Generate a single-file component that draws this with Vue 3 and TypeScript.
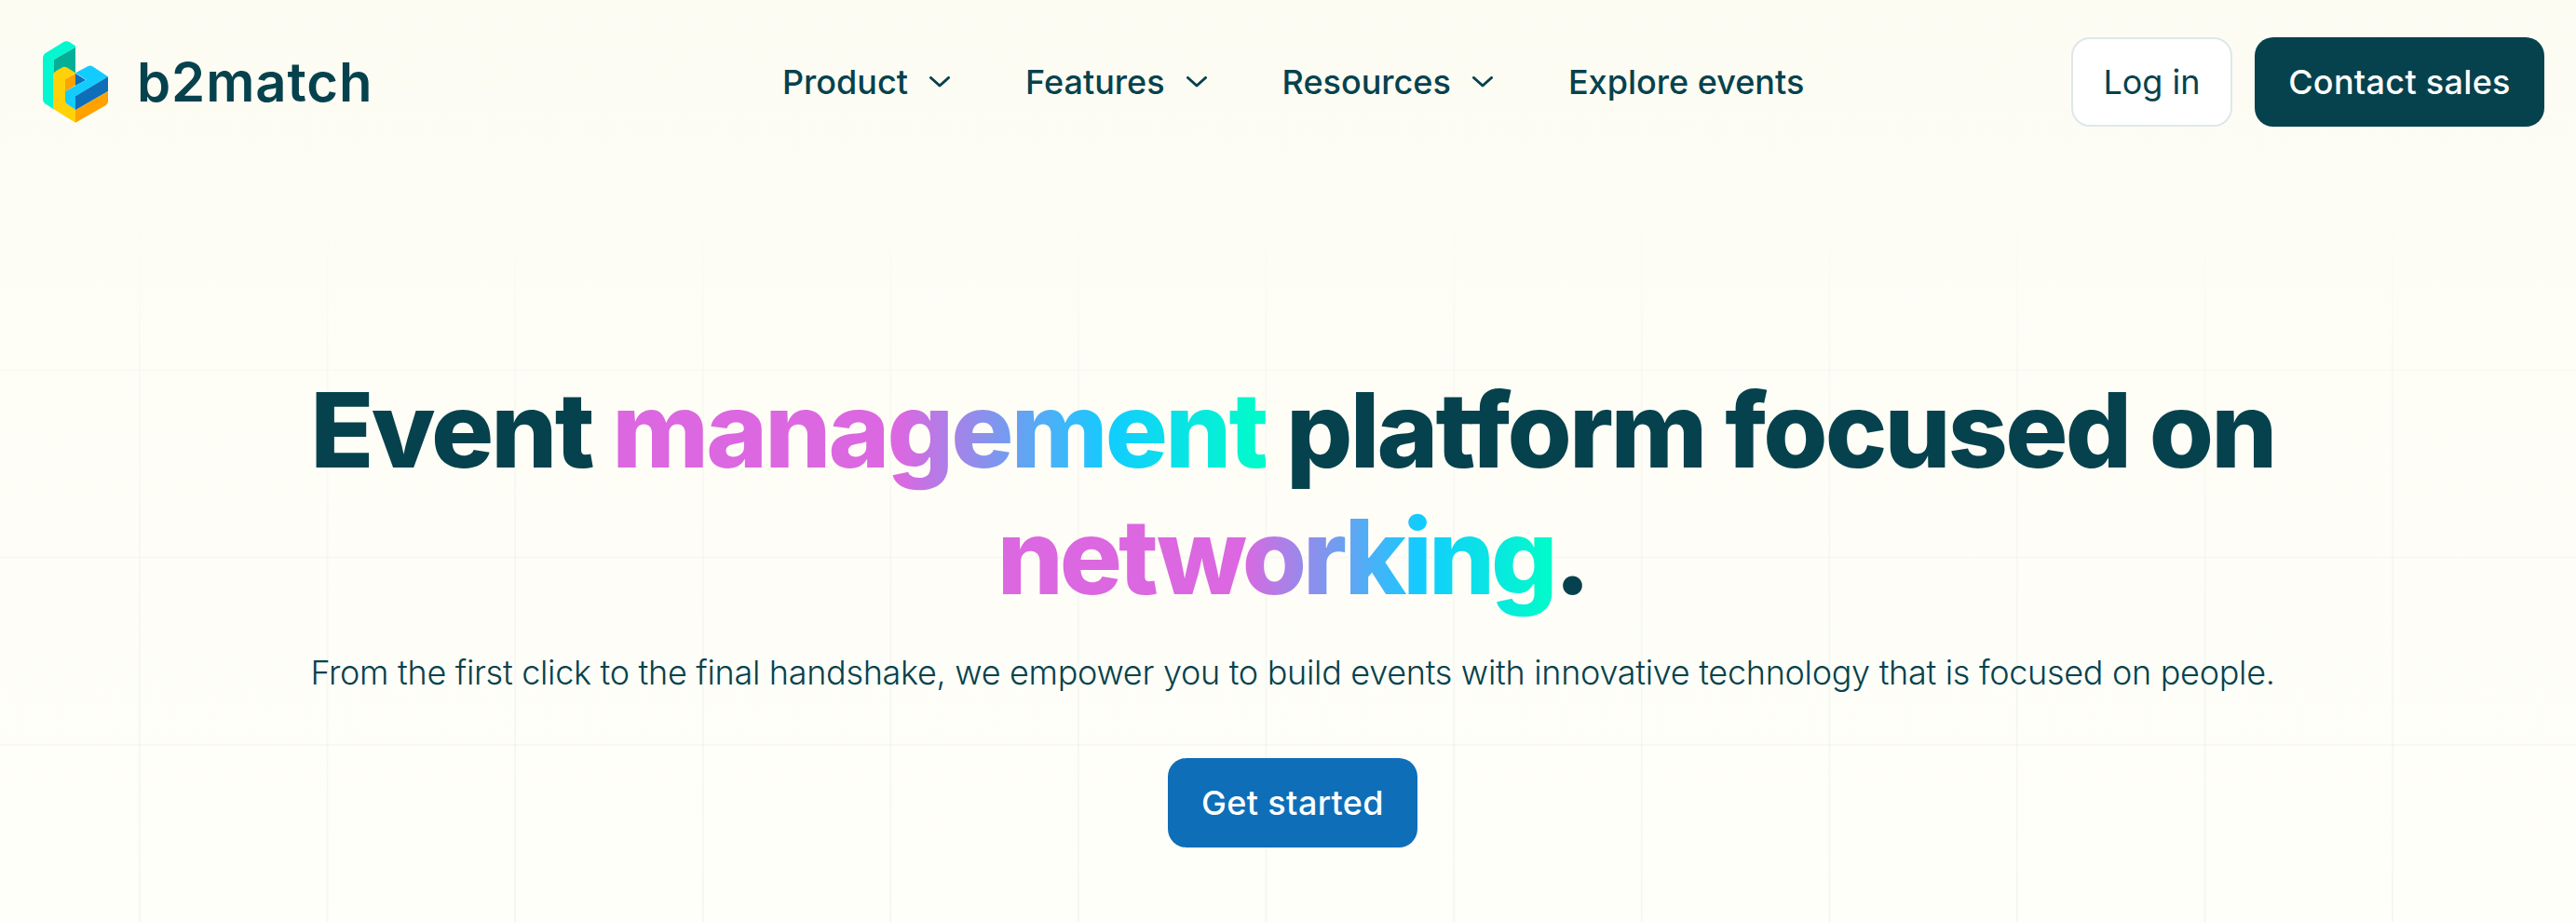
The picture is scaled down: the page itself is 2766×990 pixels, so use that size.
<script setup lang="ts">
const navItems: { label: string; caret: boolean }[] = [
  { label: 'Product', caret: true },
  { label: 'Features', caret: true },
  { label: 'Resources', caret: true },
  { label: 'Explore events', caret: false },
]
</script>

<template>
  <div class="page">
    <header class="header">
      <a class="brand">
        <svg class="mark" width="70" height="88" viewBox="48 42 210 264" aria-hidden="true">
          <path fill="#05f7cf" d="M48 97Q48 86 58 80L115 45Q124 40 133 45L153 58V62L83 103V262L54 243Q48 238 48 230Z" />
          <path fill="#05ae96" d="M83 103L153 62V146L120 126L83 146Z" />
          <path fill="#ffd208" d="M83 152Q83 142 91 138L113 126Q120 123 127 128L153 145L120 165V236Q120 241 126 245L153 262V305L83 262Z" />
          <path fill="#ffa200" d="M120 165L153 146V185L120 205Z" />
          <path fill="#0e6eb8" d="M153 146L187 168L153 186Z" />
          <path fill="#12ccff" d="M153 145L194 123Q201 119 208 124L258 157L153 220V263L126 245Q120 241 120 236V205L188 167Z" />
          <path fill="#0e6eb8" d="M153 220L258 157V204L153 265Z" />
          <path fill="#ffa200" d="M153 265L258 204V238Q258 245 250 250L153 305Z" />
        </svg>
        <span class="wordmark">b2match</span>
      </a>
      <nav class="nav">
        <a v-for="item in navItems" :key="item.label" class="nav-link">
          {{ item.label }}
          <svg v-if="item.caret" class="caret" width="22" height="12" viewBox="0 0 22 12" aria-hidden="true">
            <path d="M1.5 1.5L11 10L20.5 1.5" fill="none" stroke="#06424d" stroke-width="3" stroke-linecap="round" stroke-linejoin="round" />
          </svg>
        </a>
      </nav>
      <div class="actions">
        <a class="btn btn-login">Log in</a>
        <a class="btn btn-contact">Contact sales</a>
      </div>
    </header>

    <main class="hero">
      <h1 class="title">
        Event <span class="grad">management</span> platform focused on<br />
        <span class="grad tight">networking</span>.
      </h1>
      <p class="lead">From the first click to the final handshake, we empower you to build events with innovative technology that is focused on people.</p>
      <a class="btn btn-start">Get started</a>
    </main>
  </div>
</template>

<style>
html, body { margin: 0; padding: 0; background: #fefdf7; }
</style>

<style scoped>
.page {
  position: relative;
  width: 2766px;
  height: 990px;
  overflow: hidden;
  background: linear-gradient(180deg, #fdfcf3 0%, #fefdf6 45%, #fffffa 100%);
  font-family: Inter, "Liberation Sans", sans-serif;
  color: #06424d;
}
.page::before {
  content: "";
  position: absolute;
  inset: 0;
  background-image:
    linear-gradient(90deg, rgba(6, 66, 77, 0.045) 2px, transparent 2px),
    linear-gradient(180deg, rgba(6, 66, 77, 0.035) 2px, transparent 2px);
  background-size: 201.6px 201.3px;
  background-position: 149px 195px;
  -webkit-mask-image: linear-gradient(180deg, transparent 230px, rgba(0, 0, 0, 0.45) 380px, #000 990px);
  mask-image: linear-gradient(180deg, transparent 230px, rgba(0, 0, 0, 0.45) 380px, #000 990px);
  pointer-events: none;
}
.header {
  position: relative;
  display: grid;
  grid-template-columns: 794px auto 1fr;
  align-items: center;
  height: 176px;
  padding: 0 34px 0 46px;
  box-sizing: border-box;
}
.brand { display: flex; align-items: center; gap: 31px; }
.mark { display: block; }
.wordmark {
  font-size: 58px;
  font-weight: 600;
  line-height: 1;
  letter-spacing: 0.9px;
}
.nav { display: flex; align-items: center; gap: 81px; }
.nav-link {
  display: flex;
  align-items: center;
  gap: 23px;
  font-size: 36px;
  font-weight: 500;
  line-height: 44px;
  white-space: nowrap;
}
.caret { display: block; }
.actions { display: flex; align-items: center; gap: 24px; justify-self: end; }
.btn {
  display: flex;
  align-items: center;
  justify-content: center;
  box-sizing: border-box;
  height: 96px;
  border-radius: 20px;
  font-size: 36px;
  font-weight: 500;
  white-space: nowrap;
}
.btn-login { width: 173px; background: #fff; border: 2px solid #dfe7e9; color: #06424d; font-weight: 400; }
.btn-contact { width: 311px; background: #06424d; color: #fff; letter-spacing: 0.3px; }
.hero {
  position: relative;
  display: flex;
  flex-direction: column;
  align-items: center;
  padding-left: 10px;
  text-align: center;
}
.title {
  margin: 217px 0 0;
  font-size: 112px;
  line-height: 136px;
  font-weight: 800;
  letter-spacing: -2.85px;
  white-space: nowrap;
}
.grad {
  background: linear-gradient(90deg, #db68e0 0%, #db68e0 44%, #12ccff 76%, #02f9cc 98%);
  -webkit-background-clip: text;
  background-clip: text;
  color: transparent;
  padding-bottom: 16px;
}
.tight { letter-spacing: -4px; }
.lead {
  margin: 31px 0 0;
  font-size: 36px;
  line-height: 52px;
  font-weight: 300;
  letter-spacing: -0.3px;
  white-space: nowrap;
}
.btn-start {
  width: 268px;
  margin-top: 66px;
  background: #0e6eb8;
  color: #fff;
  letter-spacing: 0.35px;
}
</style>
